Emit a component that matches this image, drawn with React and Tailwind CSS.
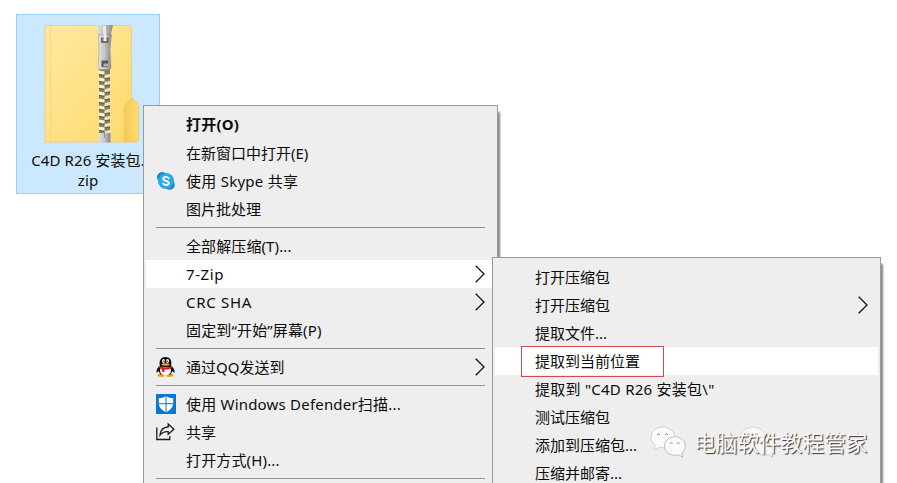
import React from 'react';

const SkypeIcon = () => (
  <svg width="20" height="20" viewBox="0 0 20 20">
    <circle cx="6.3" cy="6.3" r="5.3" fill="#1583c9" />
    <circle cx="13.4" cy="13.4" r="5.3" fill="#1583c9" />
    <circle cx="10" cy="10" r="8" fill="#27a9ea" />
    <path d="M12.7 7.2C12 6.2 11.1 5.9 10 5.9c-1.6 0-2.7.7-2.7 1.9 0 2.8 5.5 1.4 5.5 4.2 0 1.300-1.200 2.100-2.800 2.100-1.300 0-2.300-.5-2.900-1.500" fill="none" stroke="#fff" strokeWidth="1.9" strokeLinecap="round" />
  </svg>
);

const QQIcon = () => (
  <svg width="20" height="22" viewBox="0 0 20 22">
    <ellipse cx="5.300" cy="19.300" rx="3.900" ry="1.700" fill="#f0a01c" />
    <ellipse cx="13.500" cy="19.300" rx="3.900" ry="1.700" fill="#f0a01c" />
    <path d="M3.500 10C1.300 12 0 14.600.5 16.300c.6.7 1.500-.6 2-1.300l2 3.500h10l2-3.500c.5.700 1.400 2 2 1.300.5-1.700-.8-4.300-3-6.300z" fill="#0b0b0d" />
    <ellipse cx="9.500" cy="14.500" rx="5.500" ry="4.900" fill="#fff" />
    <path d="M3.800 9.500C2.800 4 5.300 1 9.500 1s6.700 3 5.700 8.500c-1 2-10.400 2-11.400 0z" fill="#0b0b0d" />
    <ellipse cx="7.500" cy="5" rx="1.500" ry="2" fill="#fff" />
    <ellipse cx="11.500" cy="5" rx="1.500" ry="2" fill="#fff" />
    <circle cx="7.900" cy="5.300" r=".7" fill="#111" />
    <circle cx="11.100" cy="5.300" r=".7" fill="#111" />
    <ellipse cx="9.500" cy="8.500" rx="4" ry="1.200" fill="#f7a51b" />
    <path d="M3 9.800c3.500 2 9.500 2 13 0l.5 2c-2.500 1.500-5.500 1.900-8 1.700v2.500l-2.600-.3v-2.700c-1.400-.3-2.500-.7-3.400-1.200z" fill="#e3151c" />
  </svg>
);

const DefenderIcon = () => (
  <svg width="20" height="20" viewBox="0 0 20 20">
    <path d="M0 0h20v20H0z" fill="#0877d5" />
    <path d="M10 2c2 1.600 4.500 2.100 7.200 2.200v5c0 4-3 7-7.200 9-4.200-2-7.200-5-7.200-9v-5C5.500 4.100 8 3.600 10 2z" fill="#fff" />
    <path d="M10 2v17M2 9.700h16" stroke="#0877d5" strokeWidth="1" />
  </svg>
);

const ShareIcon = () => (
  <svg width="20" height="20" viewBox="0 0 20 20" fill="none" stroke="#1c1c1c" strokeWidth="1.300">
    <path d="M.8 5.500v12h13v-3.500" />
    <path d="M12.200 2 17.900 7.200 12.200 12.300V9.600C9 9.300 6.300 10.200 4 13c.4-4.500 3.400-7.800 8.200-8z" />
  </svg>
);

const Chevron = () => (
  <svg width="10" height="18" viewBox="0 0 10 18" fill="none" stroke="#151515" strokeWidth="1.300">
    <path d="M.7.8 9 9 .7 17.200" />
  </svg>
);

const teeth = Array.from({ length: 9 }, (_, i) => i);

const ZipFolder = () => (
  <svg width="96" height="118" viewBox="0 0 96 118">
    <defs>
      <linearGradient id="folder" x1="0" y1="0" x2="1" y2="1">
        <stop offset="0" stopColor="#ffe9a0" />
        <stop offset="1" stopColor="#ffd96c" />
      </linearGradient>
      <linearGradient id="metal" x1="0" x2="1">
        <stop offset="0" stopColor="#e4e4e4" />
        <stop offset=".5" stopColor="#c4c4c4" />
        <stop offset="1" stopColor="#858585" />
      </linearGradient>
      <linearGradient id="tab" x1="0" x2="1">
        <stop offset="0" stopColor="#f5cb59" />
        <stop offset="1" stopColor="#ffda70" />
      </linearGradient>
    </defs>
    <path d="M1 .5h84q2.500 0 2.500 2.500v69l5.500 6q1.500 2 1.500 5v31q0 3-3 3H1z" fill="url(#folder)" stroke="#ecca68" strokeWidth=".8" />
    <path d="M6.500 1v116" stroke="#f2d57c" strokeWidth=".7" />
    <path d="M80 116.500V84q0-3 2-5l5.500-6 5.500 5q1.500 2 1.500 5v31q0 2.500-3 2.500z" fill="url(#tab)" stroke="#ecc65e" strokeWidth=".6" />
    <g transform="translate(-1 0)">
      <path d="M56 40h11v70H56z" fill="#8a7f52" />
      {teeth.map((i) => (
        <g key={i}>
          <path d={`M56 ${45.500 + i * 7}l5.500 1v3.200l-5.500-1z`} fill="#f4f2e5" />
          <path d={`M61.500 ${50 + i * 7}l5.500-1v3.200l-5.500 1z`} fill="#e6e3d2" />
          <path d={`M56 ${49.500 + i * 7}l5.500 1M61.500 ${54 + i * 7}l5.500-1`} stroke="#5c5337" strokeWidth=".8" />
        </g>
      ))}
      <path d="M53 0h17l-2 9-1 7H56l-1-7z" fill="url(#metal)" />
      <path d="M60 1h3v13h-3z" fill="#e9e9e9" />
      <path d="M55.500 9.500h13L67 25l1 17q0 2.500-2.500 2.500h-8q-2.500 0-2.500-2.500l1-17z" fill="url(#metal)" stroke="#929292" strokeWidth=".5" />
      <path d="M58.500 13h6.500v4.500h-6.500z" fill="#777" stroke="#555" strokeWidth=".8" />
      <path d="M60.500 9h3v7h-3z" fill="#ededed" />
      <path d="M58.500 35.500h6.500v6.500h-6.500z" fill="#555" />
      <path d="M60.500 38.500h4.500v3h-4.500z" fill="#b5b5b5" />
      <path d="M55.500 108h12v9.500h-12z" fill="url(#metal)" />
      <path d="M61.500 107v6" stroke="#888" strokeWidth=".8" />
    </g>
  </svg>
);

const WechatIcon = () => (
  <svg width="36" height="32" viewBox="0 0 36 32" fill="#fafafa" stroke="#999" strokeWidth=".6">
    <path d="M12.500 1C6 1 1 5.600 1 11.300c0 3.200 1.500 6 4.300 8L3.800 24l5.500-2.700c10 2.300 15.700-4 15.700-10C25 5.600 19.200 1 12.500 1z" stroke="#bbb" />
    <path d="M25 10.800c-5.800 0-10.500 4-10.500 9.200 0 6.500 6.500 10.800 13.800 8.800l4.500 2.400-1.200-4c2.300-1.700 3.700-4.300 3.700-7.200 0-5.200-4.800-9.200-10.300-9.200z" />
    <path d="M7 8.800q1.500-2 3 0M15 8.800q1.500-2 3 0M20 17.500q1.300-1.700 2.600 0M27 17.500q1.300-1.700 2.600 0" fill="none" stroke="#888" strokeWidth="1" />
  </svg>
);

const mainMenu = [
  { label: '打开(O)', bold: true, tracking: 'tracking-[0.2px]' },
  { label: '在新窗口中打开(E)' },
  { label: '使用 Skype 共享', icon: SkypeIcon, tracking: 'tracking-[0.25px]' },
  { label: '图片批处理' },
  { separator: true },
  { label: '全部解压缩(T)...', tracking: 'tracking-[0.1px]' },
  { label: '7-Zip', arrow: true, active: true, tracking: 'tracking-[0.6px]' },
  { label: 'CRC SHA', arrow: true, tracking: 'tracking-[0.7px]' },
  { label: '固定到“开始”屏幕(P)', tracking: 'tracking-[0.15px]' },
  { separator: true },
  { label: '通过QQ发送到', icon: QQIcon, arrow: true },
  { separator: true },
  { label: '使用 Windows Defender扫描...', icon: DefenderIcon, tracking: 'tracking-[0.2px]' },
  { label: '共享', icon: ShareIcon },
  { label: '打开方式(H)...', tracking: 'tracking-[0.15px]' },
  { separator: true },
  { label: '' },
];

const zipMenu = [
  { label: '打开压缩包' },
  { label: '打开压缩包', arrow: true },
  { label: '提取文件...' },
  { label: '提取到当前位置', active: true, marked: true },
  { label: '提取到 "C4D R26 安装包\\"', tracking: 'tracking-[0.25px]' },
  { label: '测试压缩包' },
  { label: '添加到压缩包...' },
  { label: '压缩并邮寄...' },
  { label: '' },
];

const MenuItem = ({ label, icon: Icon, arrow, active, bold, marked, tracking = '' }) => (
  <div className={`relative flex h-7 items-center pr-2.5 ${active ? 'bg-white' : ''}`}>
    <div className="flex w-10 shrink-0 items-center pl-2.5">{Icon && <Icon />}</div>
    <span className={`flex-1 whitespace-pre text-[15px] leading-7 ${tracking} ${bold ? 'pb-0.5 font-bold' : ''}`}>{label}</span>
    {arrow && <Chevron />}
    {marked && <div className="absolute -top-px left-[26px] h-[31px] w-[143px] border border-[#d04a4a]" />}
  </div>
);

const Menu = ({ items, className }) => (
  <div className={`absolute border border-[#999] bg-[#eee] px-0.5 pt-[5px] shadow-[3px_6px_2px_-1px_#858585] ${className}`}>
    {items.map((item, index) =>
      item.separator ? (
        <div key={index} className="flex h-[9px] items-center pl-2.5 pr-2.5">
          <div className="h-px w-full bg-[#919191]" />
        </div>
      ) : (
        <MenuItem key={index} {...item} />
      )
    )}
  </div>
);

const App = () => {
  return (
    <div className="relative h-[483px] w-[897px] overflow-hidden bg-white font-['Noto_Sans','Noto_Sans_CJK_SC',sans-serif] text-[#0c0c0c]">
      {/* Desktop file */}
      <div className="absolute left-4 top-3.5 flex h-[180px] w-36 flex-col items-center border border-[#99d1f5] bg-[#cce8ff] pt-2.5">
        <div className="ml-[7px]"><ZipFolder /></div>
        <div className="mt-[7px] whitespace-nowrap text-center text-[15px] leading-5 tracking-[0.1px]">
          C4D R26 安装包.<br />zip
        </div>
      </div>

      {/* Context menus */}
      <Menu items={mainMenu} className="left-[143px] top-[105px] w-[355px]" />
      <Menu items={zipMenu} className="left-[492px] top-[257px] w-[389px]" />

      {/* Watermark */}
      <div className="absolute left-[740px] top-[426px] opacity-80"><WechatIcon /></div>
      <div className="absolute left-[650px] top-[426px] flex items-start gap-2">
        <WechatIcon />
        <span className="whitespace-nowrap text-[21.7px] leading-[34px] text-[#fafafa] [text-shadow:1px_1px_1px_#333]">电脑软件教程管家</span>
      </div>
    </div>
  );
};

export default App;
